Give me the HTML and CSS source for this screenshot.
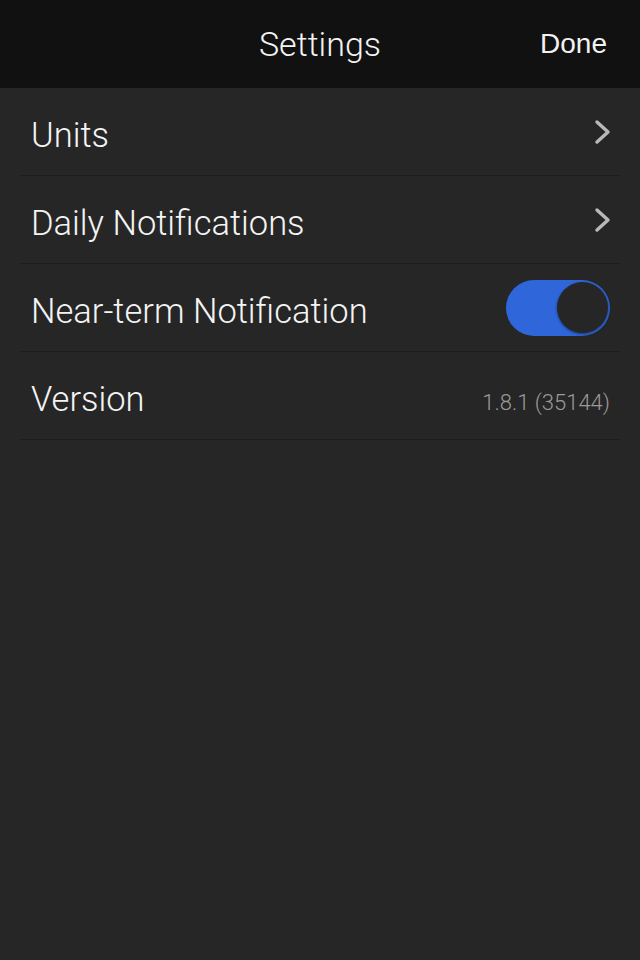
FILE: index.html
```html
<!DOCTYPE html>
<html>
<head>
<meta charset="utf-8">
<link rel="stylesheet" href="styles.css">
</head>
<body>
<header class="navbar">
  <div class="nav-side"></div>
  <h1 class="nav-title">Settings</h1>
  <div class="nav-side nav-right"><span class="done">Done</span></div>
</header>
<ul class="list">
  <li class="row">
    <span class="label">Units</span>
    <svg class="chev" width="18" height="26" viewBox="0 0 18 26"><path d="M3 3 L14 13 L3 23" fill="none" stroke="#b9b9b9" stroke-width="3.4" stroke-linecap="round" stroke-linejoin="round"/></svg>
  </li>
  <li class="row">
    <span class="label">Daily Notifications</span>
    <svg class="chev" width="18" height="26" viewBox="0 0 18 26"><path d="M3 3 L14 13 L3 23" fill="none" stroke="#b9b9b9" stroke-width="3.4" stroke-linecap="round" stroke-linejoin="round"/></svg>
  </li>
  <li class="row">
    <span class="label">Near-term Notification</span>
    <span class="toggle"><span class="knob"></span></span>
  </li>
  <li class="row">
    <span class="label">Version</span>
    <span class="value">1.8.1 (35144)</span>
  </li>
</ul>
</body>
</html>
```
FILE: styles.css
```css
html, body {
  margin: 0;
  padding: 0;
  background: #262626;
  height: 100%;
}
body {
  font-family: Roboto, "Liberation Sans", Arial, sans-serif;
  color: #f2f2f2;
}
.navbar {
  height: 88px;
  background: #111111;
  display: grid;
  grid-template-columns: 1fr auto 1fr;
  align-items: center;
}
.nav-title {
  margin: 0;
  font-size: 34px;
  font-weight: 300;
  color: #f4f4f4;
  padding-bottom: 1px;
}
.nav-right {
  display: flex;
  justify-content: flex-end;
  padding-right: 33px;
}
.done {
  font-family: "Liberation Sans", Arial, sans-serif;
  font-size: 28px;
  font-weight: 400;
  color: #f2f2f2;
  padding-bottom: 1px;
}
.list {
  list-style: none;
  margin: 0;
  padding: 0 20px;
}
.row {
  height: 87px;
  border-bottom: 1px solid #1e1e1e;
  display: flex;
  align-items: center;
  justify-content: space-between;
  padding: 0 10px 0 11px;
}
.label {
  font-size: 34.5px;
  font-weight: 300;
  color: #f4f4f4;
  padding-top: 6px;
}
.chev {
  margin-right: -2px;
}
.toggle {
  width: 104px;
  height: 56px;
  border-radius: 28px;
  background: #2f67db;
  display: flex;
  justify-content: flex-end;
  align-items: center;
  padding: 2px;
  box-sizing: border-box;
}
.knob {
  width: 51px;
  height: 51px;
  border-radius: 50%;
  background: #262626;
  box-shadow: 0 1px 3px rgba(0,0,0,0.5);
}
.value {
  font-size: 22px;
  font-weight: 300;
  color: #9a9a9a;
  padding-top: 14px;
}
```
